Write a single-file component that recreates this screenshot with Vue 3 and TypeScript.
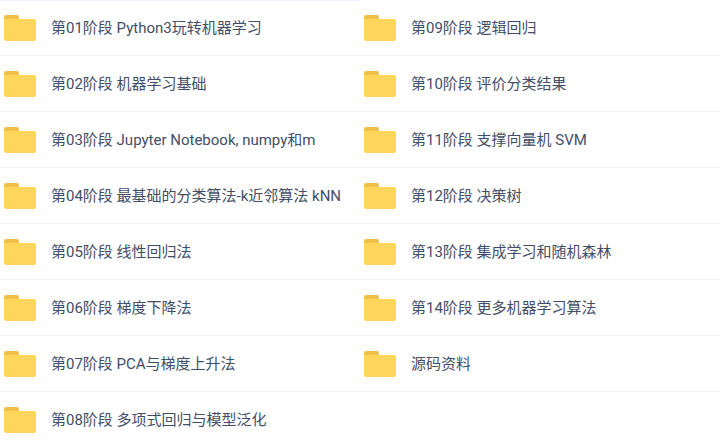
<script setup lang="ts">
const columns: string[][] = [
  [
    '第01阶段 Python3玩转机器学习',
    '第02阶段 机器学习基础',
    '第03阶段 Jupyter Notebook, numpy和m',
    '第04阶段 最基础的分类算法-k近邻算法 kNN',
    '第05阶段 线性回归法',
    '第06阶段 梯度下降法',
    '第07阶段 PCA与梯度上升法',
    '第08阶段 多项式回归与模型泛化',
  ],
  [
    '第09阶段 逻辑回归',
    '第10阶段 评价分类结果',
    '第11阶段 支撑向量机 SVM',
    '第12阶段 决策树',
    '第13阶段 集成学习和随机森林',
    '第14阶段 更多机器学习算法',
    '源码资料',
  ],
]
</script>

<template>
  <main class="folders">
    <ul v-for="(names, index) in columns" :key="index" class="column">
      <li v-for="name in names" :key="name" class="row">
        <svg class="icon" viewBox="0 0 32 26" aria-hidden="true">
          <path d="M0 2Q0 0 2 0H13Q15 0 15 2V8H0Z" fill="#eec04a" />
          <path d="M0 4H30Q32 4 32 6V24Q32 26 30 26H2Q0 26 0 24Z" fill="#ffd55c" />
        </svg>
        <a class="name" href="#">{{ name }}</a>
      </li>
    </ul>
  </main>
</template>

<style>
body {
  margin: 0;
  background: #fff;
}
</style>

<style scoped>
.folders {
  display: grid;
  grid-template-columns: 1fr 1fr;
  align-items: start;
  font-family: Tahoma, Roboto, "Noto Sans CJK SC", sans-serif;
  font-size: 15px;
  line-height: 20px;
  color: #424e67;
}

.column {
  margin: 0;
  padding: 0;
  list-style: none;
}

.row {
  display: flex;
  align-items: center;
  gap: 15px;
  box-sizing: border-box;
  height: 56px;
  padding-left: 4px;
  border-bottom: 1px solid #f2f4fb;
}

.column:first-child .row:first-child {
  box-shadow: inset 0 1px #f0f4ff;
}

.icon {
  flex: none;
  width: 32px;
  height: 26px;
}

.name {
  color: inherit;
  text-decoration: none;
  white-space: nowrap;
}
</style>
